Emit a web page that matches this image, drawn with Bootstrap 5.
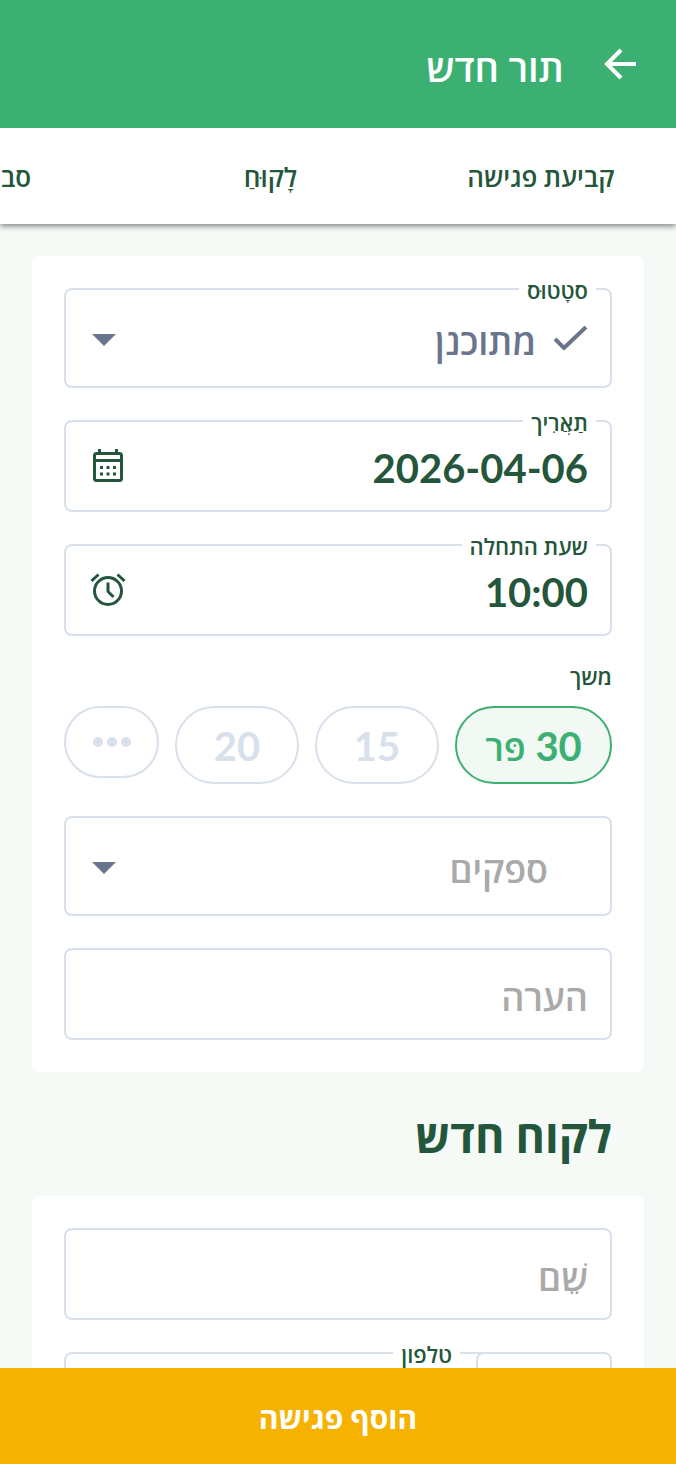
<!DOCTYPE html>
<html lang="he" dir="rtl">
<head>
<meta charset="utf-8">
<meta name="viewport" content="width=device-width, initial-scale=1">
<title>תור חדש</title>
<link rel="stylesheet" href="https://cdn.jsdelivr.net/npm/bootstrap@5.3.0/dist/css/bootstrap.min.css">
<style>
  :root { --green: #3cb073; --dark: #24563c; --line: #d8e0eb; --slate: #69758c; --pale: #f5faf7; }
  body { font-family: Lato, "Open Sans", "Noto Sans", sans-serif; color: var(--dark); background: var(--pale); }
  .topbar { background: var(--green); height: 128px; padding: 0 36px; gap: 36px; z-index: 2; }
  .topbar h1 { font-size: 38px; line-height: 48px; font-weight: 600; padding-top: 6px; }
  .tabs { height: 96px; box-shadow: 0 2px 6px rgba(0, 0, 0, .5); }
  .tabs a { flex: 0 0 40%; font-size: 26px; line-height: 36px; font-weight: 600; color: var(--dark); padding-top: 2px; }
  .tabs a:last-child { flex-basis: auto; padding-right: 104px; }
  .scroller { min-height: 0; overflow: auto; scrollbar-width: none; padding: 32px 32px 0; }
  .scroller::-webkit-scrollbar { display: none; }
  .panel { border-radius: 8px; padding: 32px; gap: 32px; }
  .field { border: 2px solid var(--line); border-radius: 8px; height: 92px; }
  .field.tall { height: 100px; }
  .field > label { position: absolute; top: -15px; right: 14px; padding: 0 8px; background: #fff; font-size: 22px; line-height: 32px; font-weight: 600; z-index: 1; }
  .field .form-control, .field .form-select { border: 0; box-shadow: none; background: none; height: 100%; padding: 6px 22px 0; font-size: 36px; line-height: 48px; font-weight: 600; color: var(--dark); border-radius: 6px; }
  .field .form-control::placeholder { color: #a9a9a9; opacity: 1; }
  .field .figures { font-size: 40px; font-weight: 700; padding-top: 4px; }
  .field .form-select { color: var(--slate); }
  .field .form-select.with-check { padding-right: 74px; }
  .field .form-select.empty { color: #a9a9a9; padding-right: 62px; }
  .field .end-icon { position: absolute; left: 22px; top: 50%; transform: translateY(-50%); pointer-events: none; }
  .field .check-icon { position: absolute; right: 22px; top: 50%; transform: translateY(-50%); pointer-events: none; }
  .duration-title { font-size: 22px; line-height: 26px; font-weight: 600; margin: -4px 0 16px; }
  .pill { border: 2px solid var(--line); border-radius: 40px; height: 78px; font-size: 40px; line-height: 48px; font-weight: 700; color: var(--line); background: #fff; padding: 2px 0 0; }
  .pill.chosen { border-color: var(--green); color: var(--green); background: #f2f9f5; flex: 158 1 0; }
  .pill.mid { flex: 124 1 0; }
  .pill.more { height: 72px; flex: 94 1 0; padding: 0; }
  .pill bdi { font-size: 36px; font-weight: 600; }
  h2 { font-size: 45px; line-height: 60px; font-weight: 700; padding: 34px 32px 30px; }
  .code { flex: 0 0 136px; background: #fff; z-index: 1; }
  .phone { margin-right: -8px; border-right: 0; border-radius: 8px 0 0 8px; }
  .phone > label { right: 24px; }
  .submit { height: 96px; background: #f6b200; font-size: 30px; line-height: 40px; font-weight: 700; padding-top: 8px; }
</style>
</head>
<body>
<div class="d-flex flex-column vh-100 overflow-hidden">
  <header class="topbar d-flex align-items-center text-white flex-shrink-0 position-relative">
    <button type="button" class="btn p-0 border-0 text-white lh-1" aria-label="חזרה">
      <svg width="40" height="40" viewBox="0 0 40 40" fill="none" stroke="currentColor" stroke-width="4"><path d="M36 20H7M21 6L7 20l14 14"/></svg>
    </button>
    <h1 class="m-0">תור חדש</h1>
  </header>
  <nav class="tabs d-flex flex-nowrap align-items-center bg-white overflow-hidden flex-shrink-0 position-relative z-1">
    <a href="#meeting" class="text-decoration-none text-center">קביעת פגישה</a>
    <a href="#client" class="text-decoration-none text-center">לָקוּחַ</a>
    <a href="#rounds" class="text-decoration-none">סב</a>
  </nav>
  <main class="scroller flex-grow-1">
    <section id="meeting" class="panel bg-white d-flex flex-column">
      <div class="field tall position-relative">
        <label for="status">סטָטוּס</label>
        <svg class="check-icon" width="34" height="24" viewBox="0 0 34 24" fill="none" stroke="#69758c" stroke-width="4"><path d="M1 13l9 9L32 1"/></svg>
        <select id="status" class="form-select with-check"><option>מתוכנן</option></select>
        <svg class="end-icon" width="32" height="16" viewBox="0 0 32 16" fill="#69758c"><path d="M4 4h24L16 16z"/></svg>
      </div>
      <div class="field position-relative">
        <label for="date">תַאֲרִיך</label>
        <input id="date" class="form-control figures" value="2026-04-06">
        <svg class="end-icon" width="40" height="40" viewBox="0 0 40 40" fill="none" stroke="#24563c" stroke-width="3"><rect x="6.500" y="7.500" width="27" height="27" rx="2"/><path d="M6 14.500h28M11.500 3v5M28.500 3v5"/><path d="M12 21.500h3m3.500 0h3m3.500 0h3M12 28h3m3.500 0h3m3.500 0h3"/></svg>
      </div>
      <div class="field position-relative">
        <label for="time">שעת התחלה</label>
        <input id="time" class="form-control figures" value="10:00">
        <svg class="end-icon" width="40" height="40" viewBox="0 0 40 40" fill="none" stroke="#24563c" stroke-width="3"><circle cx="20" cy="21" r="13.500"/><path d="M20 12.500v9l5.500 5.500M3.500 11l7-6.500M36.500 11l-7-6.500"/></svg>
      </div>
      <div>
        <div class="duration-title" id="duration">משך</div>
        <div class="d-flex align-items-start gap-3" role="group" aria-labelledby="duration">
          <button type="button" class="pill chosen">30 <bdi>פּר</bdi></button>
          <button type="button" class="pill mid">15</button>
          <button type="button" class="pill mid">20</button>
          <button type="button" class="pill more" aria-label="עוד">
            <svg class="d-block mx-auto" width="40" height="12" viewBox="0 0 40 12" fill="currentColor"><circle cx="6" cy="6" r="5"/><circle cx="20" cy="6" r="5"/><circle cx="34" cy="6" r="5"/></svg>
          </button>
        </div>
      </div>
      <div class="field tall position-relative">
        <select class="form-select empty" aria-label="ספקים"><option>ספקים</option></select>
        <svg class="end-icon" width="32" height="16" viewBox="0 0 32 16" fill="#69758c"><path d="M4 4h24L16 16z"/></svg>
      </div>
      <div class="field position-relative">
        <input class="form-control" placeholder="הערה" aria-label="הערה">
      </div>
    </section>
    <h2 class="m-0">לקוח חדש</h2>
    <section id="client" class="panel bg-white d-flex flex-column">
      <div class="field position-relative">
        <input class="form-control" placeholder="שֵׁם" aria-label="שֵׁם">
      </div>
      <div class="d-flex">
        <div class="field code position-relative"><select class="form-select" aria-label="קידומת"><option></option></select></div>
        <div class="field phone position-relative flex-grow-1">
          <label for="phone">טלפון</label>
          <input id="phone" type="tel" class="form-control">
        </div>
      </div>
    </section>
  </main>
  <button type="submit" class="submit btn w-100 rounded-0 border-0 text-white flex-shrink-0">הוסף פגישה</button>
</div>
<script src="https://cdn.jsdelivr.net/npm/bootstrap@5.3.0/dist/js/bootstrap.bundle.min.js"></script>
</body>
</html>
